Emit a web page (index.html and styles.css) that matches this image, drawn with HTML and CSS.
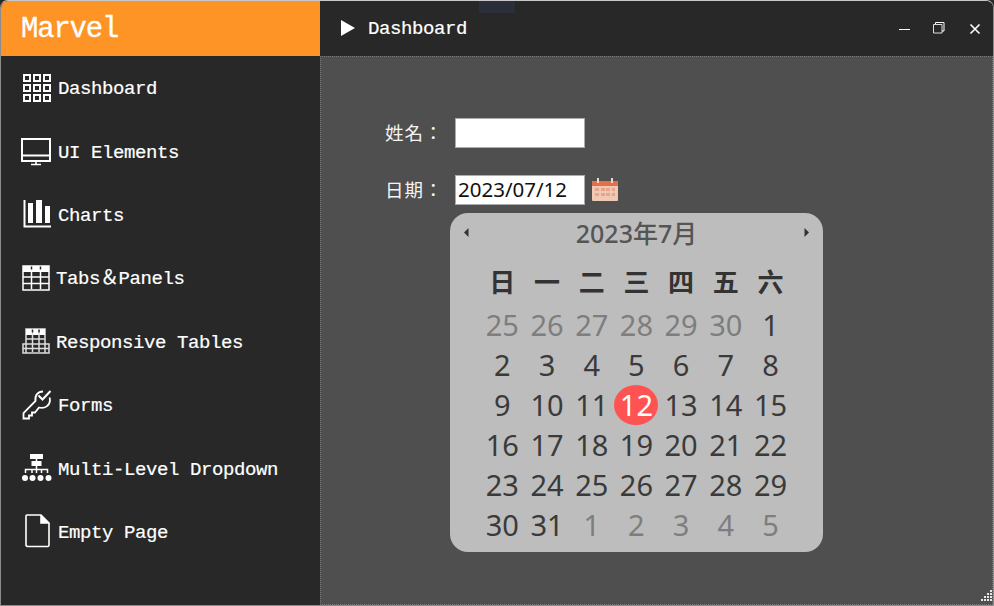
FILE: index.html
```html
<!DOCTYPE html>
<html lang="zh-TW">
<head>
<meta charset="utf-8">
<title>Marvel</title>
<link rel="stylesheet" href="styles.css">
</head>
<body>
<div class="window">
  <div class="notch"></div>
  <div class="brand">Marvel</div>
  <header class="titlebar">
    <svg class="play" width="16" height="18" viewBox="0 0 16 18"><path d="M1 1v16l14-8z" fill="#fff"/></svg>
    <span class="title">Dashboard</span>
    <div class="controls">
      <svg width="12" height="12" viewBox="0 0 12 12"><path d="M0 6.500h11" stroke="#fff" fill="none"/></svg>
      <svg class="restore" width="12" height="12" viewBox="0 0 12 12"><path d="M.5 2.500h8.500v8.500H.5z" stroke="#ddd" fill="none"/><path d="M2.500 2V.5h8.500v8.500H9" stroke="#fff" fill="none"/></svg>
      <svg width="12" height="12" viewBox="0 0 12 12"><path d="M1.500 1.500l9 9M10.500 1.500l-9 9" stroke="#fff" stroke-width="1.600" fill="none"/></svg>
    </div>
  </header>
  <nav class="sidebar">
    <a class="item">
      <svg class="icon" width="37" height="30" viewBox="0 0 37 30" fill="none" stroke="#fff" stroke-width="2">
        <path d="M3 2h6v6H3zM13 2h6v6h-6zM23 2h6v6h-6zM3 12h6v6H3zM13 12h6v6h-6zM23 12h6v6h-6zM3 22h6v6H3zM13 22h6v6h-6zM23 22h6v6h-6z"/>
      </svg>
      <span>Dashboard</span>
    </a>
    <a class="item">
      <svg class="icon" width="37" height="30" viewBox="0 0 37 30" fill="none" stroke="#fff" stroke-width="2">
        <path d="M1 3h28v22H1zM1 19.500h28" /><path d="M15 25v3M10 28.500h10" stroke-width="1.600"/>
      </svg>
      <span>UI Elements</span>
    </a>
    <a class="item">
      <svg class="icon" width="37" height="30" viewBox="0 0 37 30">
        <path d="M3.500 1v26.500H30" fill="none" stroke="#fff" stroke-width="2"/>
        <path d="M7 4h5v20H7zM15 1h6v23h-6zM24 7h5v17h-5z" fill="#fff"/>
      </svg>
      <span>Charts</span>
    </a>
    <a class="item">
      <svg class="icon" width="35" height="30" viewBox="0 0 35 30">
        <path d="M2 3h26v24H2z" fill="none" stroke="#fff" stroke-width="1.500"/>
        <path d="M2 3h26v6H2z" fill="#fff"/>
        <path d="M10.500 4v22M19.500 4v22M2 14h26M2 20.500h26" stroke="#fff" stroke-width="1.500" fill="none"/>
        <path d="M10.500 3.500v3M19.500 3.500v3" stroke="#282828" stroke-width="1.500"/>
      </svg>
      <span>Tabs＆Panels</span>
    </a>
    <a class="item">
      <svg class="icon" width="35" height="30" viewBox="0 0 35 30">
        <path d="M5 3h19v24H5zM2 18h26v9H2z" fill="none" stroke="#ddd" stroke-width="1.500"/>
        <path d="M5 3h19v6H5z" fill="#fff"/>
        <path d="M11.500 4v22M18 4v22M5 13h19M2 22.500h26" stroke="#ddd" stroke-width="1.500" fill="none"/>
        <path d="M11.500 3.500v3M18 3.500v3" stroke="#282828" stroke-width="1.500"/>
      </svg>
      <span>Responsive Tables</span>
    </a>
    <a class="item">
      <svg class="icon" width="37" height="30" viewBox="0 0 37 30" fill="none" stroke="#fff" stroke-width="1.800">
        <path d="M22 1.500c-5 0-8.500 4-7.500 9.500L2.500 23v5.500h5.500v-3h3v-3h3l4-5c6 1.500 11-2 11-7.500 0-1-.2-1.800-.5-2.500"/>
        <path d="M17.500 5.500l4 4L29.500 1" stroke-width="2"/>
      </svg>
      <span>Forms</span>
    </a>
    <a class="item">
      <svg class="icon" width="37" height="30" viewBox="0 0 37 30" fill="#fff">
        <path d="M9 1h13v5H9zM10.500 8h10v5h-10z"/>
        <path d="M15.500 6v14M4.500 20v-3.500h22V20M11 16.500V20M20.500 16.500V20" fill="none" stroke="#fff" stroke-width="1.500"/>
        <circle cx="4" cy="25" r="3"/><circle cx="11.500" cy="25" r="3"/><circle cx="19.500" cy="25" r="3"/><circle cx="27.500" cy="25" r="3"/>
      </svg>
      <span>Multi-Level Dropdown</span>
    </a>
    <a class="item">
      <svg class="icon" width="37" height="36" viewBox="0 0 37 36" fill="none" stroke="#fff" stroke-width="1.600">
        <path d="M6 2h14l8 8v22q0 1.500-1.500 1.500h-19Q5 33.500 5 32V3q0-1 1-1z"/><path d="M20 2v8h8" fill="#fff"/>
      </svg>
      <span>Empty Page</span>
    </a>
  </nav>
  <main class="content">
    <div class="field">
      <label class="label">姓名：</label>
      <input class="input" type="text">
    </div>
    <div class="field">
      <label class="label">日期：</label>
      <input class="input date" type="text" value="2023/07/12">
      <svg class="cal-icon" width="26" height="24" viewBox="0 0 26 24">
        <rect x="0" y="4" width="26" height="20" rx="1" fill="#f0c8b6"/>
        <path d="M0 5q0-1 1-1h24q1 0 1 1v4H0z" fill="#e2704a"/>
        <path d="M6 1v5M20 1v5" stroke="#f3d8cc" stroke-width="2"/>
        <path d="M3 11h4v3H3zM9 11h4v3H9zM14 11h4v3h-4zM20 11h3v3h-3zM3 16h4v3H3zM9 16h4v3H9zM14 16h4v3h-4zM20 16h3v3h-3z" fill="#e8a58c"/>
      </svg>
    </div>
    <div class="calendar">
      <div class="cal-head">
        <svg width="7" height="9" viewBox="0 0 7 9"><path d="M5.500 0v9L1 4.500z" fill="#333"/></svg>
        <span class="cal-title">2023年7月</span>
        <svg width="7" height="9" viewBox="0 0 7 9"><path d="M1.500 0v9L6 4.500z" fill="#333"/></svg>
      </div>
      <div class="weekdays"><b>日</b><b>一</b><b>二</b><b>三</b><b>四</b><b>五</b><b>六</b></div>
      <div class="days">
        <i>25</i><i>26</i><i>27</i><i>28</i><i>29</i><i>30</i><span>1</span>
        <span>2</span><span>3</span><span>4</span><span>5</span><span>6</span><span>7</span><span>8</span>
        <span>9</span><span>10</span><span>11</span><span class="today">12</span><span>13</span><span>14</span><span>15</span>
        <span>16</span><span>17</span><span>18</span><span>19</span><span>20</span><span>21</span><span>22</span>
        <span>23</span><span>24</span><span>25</span><span>26</span><span>27</span><span>28</span><span>29</span>
        <span>30</span><span>31</span><i>1</i><i>2</i><i>3</i><i>4</i><i>5</i>
      </div>
    </div>
    <svg class="grip" width="14" height="14" viewBox="0 0 14 14" fill="#e8e8ee">
      <path d="M11 0h2v2h-2zM8 3h2v2H8zM11 3h2v2h-2zM5 6h2v2H5zM8 6h2v2H8zM11 6h2v2h-2zM2 9h2v2H2zM5 9h2v2H5zM8 9h2v2H8zM11 9h2v2h-2z"/>
    </svg>
  </main>
</div>
</body>
</html>
```
FILE: styles.css
```css
* { box-sizing: border-box; }
html, body { margin: 0; height: 100%; background: #2a2a2a; overflow: hidden; }
.window {
  position: relative;
  width: 994px;
  height: 606px;
  display: grid;
  grid-template-columns: 319px 1fr;
  grid-template-rows: 55px 1fr;
  border: 1px solid #8c8c8c;
  border-top-color: #c9c9c9;
  border-radius: 8px 8px 0 0;
  background: #282828;
  overflow: hidden;
  font-family: "Liberation Mono", monospace;
  color: #fff;
}
.notch {
  position: absolute;
  left: 478px;
  top: -1px;
  width: 36px;
  height: 13px;
  background: #2b2f3a;
}
.brand {
  background: #ff9426;
  font-size: 29px;
  line-height: 55px;
  padding: 1px 0 0 20px;
  letter-spacing: -1.200px;
  -webkit-text-stroke: .3px #fff;
}
.titlebar {
  display: flex;
  align-items: center;
  padding-left: 20px;
  background: #282828;
}
.play { margin-right: 11px; margin-top: -2px; }
.title { font-size: 19px; letter-spacing: -.400px; padding-left: 1px; -webkit-text-stroke: .2px #fff; }
.controls { margin-left: auto; display: flex; gap: 23px; padding-right: 12px; margin-top: 1px; }
.controls svg { display: block; }
.controls .restore { margin: -1px 1px 0 -1px; }
.sidebar { padding: 0; background: #282828; }
.item {
  display: flex;
  align-items: center;
  height: 63.400px;
  padding-left: 20px;
  font-size: 19px;
  letter-spacing: -.400px;
  -webkit-text-stroke: .2px #fff;
}
.item span { white-space: pre; display: block; height: 24px; line-height: 24px; margin-top: 3px; overflow: visible; }
.icon { flex: none; display: block; }
.content {
  background: #4f4f4f;
  border: 1px dotted #777;
  padding: 61px 0 0 64px;
  position: relative;
  font-family: "Noto Sans", "Noto Sans CJK TC", sans-serif;
}
.field { display: flex; align-items: center; height: 30px; margin-bottom: 27px; }
.label {
  width: 70px;
  font-family: "Noto Sans CJK TC", sans-serif;
  font-size: 18.500px;
  letter-spacing: 1px;
  line-height: 28px;
  height: 28px;
  margin-top: -3px;
  color: #f4f4f4;
}
.input {
  width: 130px;
  height: 30px;
  border: 1px solid #aaacb2;
  background: #fff;
  padding: 0 2px 2px;
  font: 400 20.500px "Noto Sans", sans-serif;
  color: #111;
  outline: none;
}
.cal-icon { margin-left: 7px; margin-top: -2px; }
.calendar {
  position: absolute;
  left: 129px;
  top: 156px;
  width: 373px;
  height: 339px;
  background: #bdbdbd;
  border-radius: 18px;
}
.cal-head {
  display: flex;
  align-items: center;
  justify-content: space-between;
  height: 38px;
  padding: 0 13px;
}
.cal-title {
  font-size: 25px;
  font-weight: 500;
  color: #555;
  margin-top: -1px;
  font-family: "Noto Sans", "Noto Sans CJK TC", sans-serif;
}
.weekdays, .days {
  display: grid;
  grid-template-columns: repeat(7, 44.700px);
  padding-left: 30px;
  justify-items: center;
  align-items: center;
  color: #333;
}
.weekdays { height: 45px; margin-top: 9px; padding-bottom: 5px; font: 700 26px "Noto Sans CJK TC", sans-serif; }
.weekdays b { font-weight: 700; }
.days { grid-auto-rows: 40px; font-size: 29px; line-height: 40px; font-weight: 400; color: #3a3a3a; }
.days i { font-style: normal; color: #7e7e7e; }
.today {
  width: 44px;
  height: 40px;
  border-radius: 50%;
  background: #ff5252;
  color: #fff;
  text-align: center;
}
.grip { position: absolute; right: -1px; bottom: 0; }
```
